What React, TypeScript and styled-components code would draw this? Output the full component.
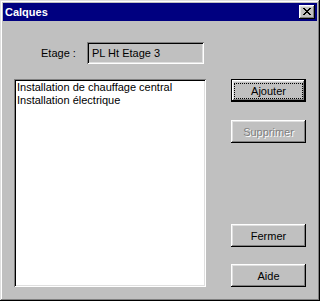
import React from 'react';
import styled, { createGlobalStyle } from 'styled-components';

const face = '#c0c0c0';
const shadow = '#808080';
const light = '#dfdfdf';

const GlobalStyle = createGlobalStyle`
  html, body {
    margin: 0;
    padding: 0;
    background: ${face};
  }
  body {
    font-family: 'Liberation Sans', Arial, sans-serif;
    font-size: 11px;
    color: #000;
  }
`;

const Window = styled.div`
  width: 320px;
  height: 301px;
  box-sizing: border-box;
  padding: 3px;
  background: ${face};
  box-shadow: inset -1px -1px #000, inset 1px 1px ${light}, inset -2px -2px ${shadow}, inset 2px 2px #fff;
  display: flex;
  flex-direction: column;
`;

const TitleBar = styled.div`
  height: 18px;
  background: #000080;
  display: flex;
  align-items: center;
  justify-content: space-between;
  padding: 0 2px 0 2px;
`;

const Title = styled.span`
  color: #fff;
  font-weight: bold;
  font-size: 11px;
  line-height: 18px;
`;

const bevel = `box-shadow: inset -1px -1px #000, inset 1px 1px #fff, inset -2px -2px ${shadow}, inset 2px 2px ${light};`;
const sunken = `box-shadow: inset 1px 1px ${shadow}, inset -1px -1px #fff, inset 2px 2px #000, inset -2px -2px ${light};`;

const CloseButton = styled.div`
  width: 16px;
  height: 14px;
  background: ${face};
  ${bevel}
  display: flex;
  align-items: center;
  justify-content: center;
  padding: 0 0 1px 0;
  box-sizing: border-box;
`;

const Body = styled.div`
  display: grid;
  grid-template-columns: 192px 75px;
  grid-template-rows: 22px 208px;
  column-gap: 25px;
  row-gap: 15px;
  padding: 21px 0 0 11px;
`;

const EtageRow = styled.div`
  display: flex;
  align-items: center;
  padding-left: 27px;
  gap: 11px;
`;

const Label = styled.span`
  width: 35px;
  white-space: nowrap;
`;

const Field = styled.div`
  width: 117px;
  height: 22px;
  box-sizing: border-box;
  padding: 0 3px 0 5px;
  display: flex;
  align-items: center;
  background: ${face};
  ${sunken}
`;

const ListBox = styled.div`
  grid-column: 1;
  grid-row: 2;
  background: #fff;
  box-sizing: border-box;
  padding: 2px 2px 2px 3px;
  ${sunken}
`;

const ListItem = styled.div`
  line-height: 13px;
  white-space: nowrap;
`;

const ButtonColumn = styled.div`
  grid-column: 2;
  grid-row: 2;
  display: flex;
  flex-direction: column;
  justify-content: space-between;
`;

const ButtonGroup = styled.div<{ $gap: number }>`
  display: flex;
  flex-direction: column;
  gap: ${p => p.$gap}px;
`;

const Button = styled.div<{ $default?: boolean; $disabled?: boolean }>`
  width: 75px;
  height: 23px;
  box-sizing: border-box;
  background: ${face};
  display: flex;
  align-items: center;
  justify-content: center;
  color: ${p => (p.$disabled ? shadow : '#000')};
  text-shadow: ${p => (p.$disabled ? '1px 1px #fff' : 'none')};
  ${p =>
    p.$default
      ? `box-shadow: inset 0 0 0 1px #000, inset -2px -2px #000, inset 2px 2px #fff, inset -3px -3px ${shadow}, inset 3px 3px ${light};`
      : bevel}
`;

const FocusFrame = styled.span`
  align-self: stretch;
  flex: 1;
  margin: 4px 3px 3px 3px;
  border: 1px dotted #000;
  display: flex;
  align-items: center;
  justify-content: center;
`;

const CloseIcon = () => (
  <svg width="8" height="7" viewBox="0 0 8 7" shapeRendering="crispEdges">
    <path
      fill="#000"
      d="M0 0h2v1h-2zM6 0h2v1h-2zM1 1h2v1h-2zM5 1h2v1h-2zM2 2h4v1h-4zM3 3h2v1h-2zM2 4h4v1h-4zM1 5h2v1h-2zM5 5h2v1h-2zM0 6h2v1h-2zM6 6h2v1h-2z"
    />
  </svg>
);

const layers = ['Installation de chauffage central', 'Installation électrique'];

export default function App() {
  return (
    <>
      <GlobalStyle />
      <Window>
        <TitleBar>
          <Title>Calques</Title>
          <CloseButton>
            <CloseIcon />
          </CloseButton>
        </TitleBar>
        <Body>
          <EtageRow>
            <Label>Etage :</Label>
            <Field>PL Ht Etage 3</Field>
          </EtageRow>
          <div />
          <ListBox>
            {layers.map(l => (
              <ListItem key={l}>{l}</ListItem>
            ))}
          </ListBox>
          <ButtonColumn>
            <ButtonGroup $gap={18}>
              <Button $default>
                <FocusFrame>Ajouter</FocusFrame>
              </Button>
              <Button $disabled>Supprimer</Button>
            </ButtonGroup>
            <ButtonGroup $gap={17}>
              <Button>Fermer</Button>
              <Button>Aide</Button>
            </ButtonGroup>
          </ButtonColumn>
        </Body>
      </Window>
    </>
  );
}
